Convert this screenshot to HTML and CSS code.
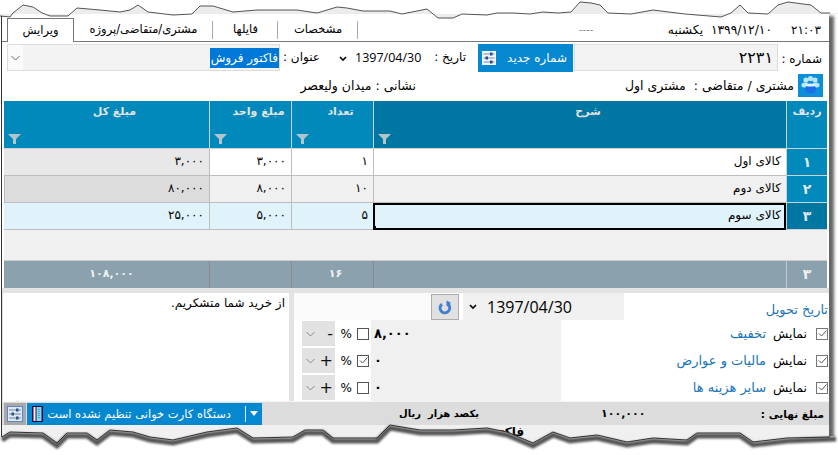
FILE: index.html
```html
<!DOCTYPE html>
<html lang="fa">
<head>
<meta charset="utf-8">
<title>فاکتور فروش</title>
<link rel="stylesheet" href="styles.css">
</head>
<body>
<div class="page">
  <div class="window">
    <header class="topbar">
      <nav class="tabs">
        <span class="tab tab-active">ویرایش</span>
        <span class="tab tab-w2">مشتری/متقاضی/پروژه</span>
        <span class="tab tab-w3">فایلها</span>
        <span class="tab tab-w4">مشخصات</span>
      </nav>
      <span class="dashes">----</span>
      <span class="today">۱۳۹۹/۱۲/۱۰&nbsp; یکشنبه</span>
      <span class="clock">۲۱:۰۳</span>
    </header>

    <section class="row-one" dir="rtl">
      <label class="lbl lbl-num">شماره :</label>
      <div class="num-field">۲۲۳۱</div>
      <button class="new-btn"><span>شماره جدید</span>
        <svg class="new-icon" width="14" height="14" viewBox="0 0 14 14"><rect width="14" height="14" fill="#f2f6fc"/><path d="M1.500 3h11M1.500 7h11M1.500 11h11" stroke="#6f8db5"/><rect x="8" y="1.500" width="2.500" height="3" fill="#2a4f80"/><rect x="3.500" y="5.500" width="2.500" height="3" fill="#2a4f80"/><rect x="8" y="9.500" width="2.500" height="3" fill="#2a4f80"/></svg>
      </button>
      <label class="lbl lbl-date">تاریخ :</label>
      <span class="date-val"><span class="latin">1397/04/30</span></span>
      <svg class="chev-dark" width="8" height="6" viewBox="0 0 8 6"><path d="M1 1l3 3 3-3" fill="none" stroke="#000" stroke-width="1.600"/></svg>
      <label class="lbl lbl-title">عنوان :</label>
      <div class="combo">
        <span class="combo-sel">فاکتور فروش</span>
        <span class="combo-btn"><svg width="9" height="6" viewBox="0 0 9 6"><path d="M.5 1l4 4 4-4" fill="none" stroke="#666"/></svg></span>
      </div>
    </section>

    <section class="row-two" dir="rtl">
      <span class="cust-icon"><svg width="25" height="23" viewBox="0 0 25 23"><g fill="#b9e6fc"><circle cx="8" cy="6" r="2.600"/><circle cx="17" cy="6" r="2.600"/><circle cx="12.500" cy="4.500" r="2.600"/><ellipse cx="7" cy="11" rx="3.600" ry="2.600"/><ellipse cx="18" cy="11" rx="3.600" ry="2.600"/></g><ellipse cx="12.500" cy="15" rx="5.500" ry="4.500" fill="#1a6fe8"/><ellipse cx="12.500" cy="11" rx="5" ry="1.500" fill="#e2f6ff"/></svg></span>
      <span class="cust">مشتری / متقاضی :&nbsp; مشتری اول</span>
      <span class="addr">نشانی : میدان ولیعصر</span>
    </section>

    <section class="grid" dir="rtl">
      <div class="hd hd-first">ردیف</div>
      <div class="hd hd-active">شرح<svg class="funnel" width="13" height="10" viewBox="0 0 13 10"><path d="M0 0h13L8 5v5H5V5z"/></svg></div>
      <div class="hd">تعداد<svg class="funnel" width="13" height="10" viewBox="0 0 13 10"><path d="M0 0h13L8 5v5H5V5z"/></svg></div>
      <div class="hd">مبلغ واحد<svg class="funnel" width="13" height="10" viewBox="0 0 13 10"><path d="M0 0h13L8 5v5H5V5z"/></svg></div>
      <div class="hd hd-last">مبلغ کل<svg class="funnel" width="13" height="10" viewBox="0 0 13 10"><path d="M0 0h13L8 5v5H5V5z"/></svg></div>

      <div class="rh">۱</div>
      <div class="c">کالای اول</div>
      <div class="c">۱</div>
      <div class="c">۳,۰۰۰</div>
      <div class="c c-total">۳,۰۰۰</div>

      <div class="rh">۲</div>
      <div class="c c-alt">کالای دوم</div>
      <div class="c c-alt">۱۰</div>
      <div class="c c-alt">۸,۰۰۰</div>
      <div class="c c-alt-total">۸۰,۰۰۰</div>

      <div class="rh rh-active">۳</div>
      <div class="c c-sel c-focus">کالای سوم<span class="handle"></span></div>
      <div class="c c-sel">۵</div>
      <div class="c c-sel">۵,۰۰۰</div>
      <div class="c c-sel c-end">۲۵,۰۰۰</div>

      <div class="empty"></div>

      <div class="ft ft-count">۳</div>
      <div class="ft"></div>
      <div class="ft ft-mid">۱۶</div>
      <div class="ft"></div>
      <div class="ft ft-mid ft-last">۱۰۸,۰۰۰</div>
    </section>

    <section class="lower">
      <div class="note" dir="rtl">از خرید شما متشکریم.</div>
      <div class="side">
        <div class="side-top">
          <span class="side-blank"></span>
          <button class="refresh"><svg width="16" height="16" viewBox="0 0 16 16"><path d="M5 5.200A4.800 4.800 0 1 0 12 6.500" fill="none" stroke="#3f7fd0" stroke-width="3"/><path d="M9.500 1.500l4 2-.5 4.500-3.500-1z" fill="#3f7fd0"/></svg></button>
          <div class="delivery">
            <svg width="8" height="6" viewBox="0 0 8 6"><path d="M1 1l3 3 3-3" fill="none" stroke="#000" stroke-width="1.600"/></svg>
            <span class="latin">1397/04/30</span>
          </div>
          <div class="delivery-lbl" dir="rtl">تاریخ تحویل</div>
        </div>

        <div class="amount-row">
          <div class="mini"><svg width="9" height="6" viewBox="0 0 9 6"><path d="M.5 1l4 4 4-4" fill="none" stroke="#888"/></svg><span class="sign">-</span></div>
          <div class="pct">%</div>
          <span class="box"></span>
          <div class="val">۸,۰۰۰</div>
          <div class="opt" dir="rtl"><span class="box box-on"><svg width="11" height="11" viewBox="0 0 11 11"><path d="M2 5.500l2.500 2.500L9.500 2.500" fill="none" stroke="#555"/></svg></span><span class="show">نمایش</span><span class="link">تخفیف</span></div>
        </div>
        <div class="amount-row">
          <div class="mini"><svg width="9" height="6" viewBox="0 0 9 6"><path d="M.5 1l4 4 4-4" fill="none" stroke="#888"/></svg><span class="sign">+</span></div>
          <div class="pct">%</div>
          <span class="box box-on"><svg width="11" height="11" viewBox="0 0 11 11"><path d="M2 5.500l2.500 2.500L9.500 2.500" fill="none" stroke="#555"/></svg></span>
          <div class="val">۰</div>
          <div class="opt" dir="rtl"><span class="box box-on"><svg width="11" height="11" viewBox="0 0 11 11"><path d="M2 5.500l2.500 2.500L9.500 2.500" fill="none" stroke="#555"/></svg></span><span class="show">نمایش</span><span class="link">مالیات و عوارض</span></div>
        </div>
        <div class="amount-row">
          <div class="mini"><svg width="9" height="6" viewBox="0 0 9 6"><path d="M.5 1l4 4 4-4" fill="none" stroke="#888"/></svg><span class="sign">+</span></div>
          <div class="pct">%</div>
          <span class="box"></span>
          <div class="val">۰</div>
          <div class="opt" dir="rtl"><span class="box box-on"><svg width="11" height="11" viewBox="0 0 11 11"><path d="M2 5.500l2.500 2.500L9.500 2.500" fill="none" stroke="#555"/></svg></span><span class="show">نمایش</span><span class="link">سایر هزینه ها</span></div>
        </div>
      </div>
    </section>

    <footer class="status">
      <button class="st-icon"><svg width="16" height="16" viewBox="0 0 16 16"><rect x=".5" y=".5" width="15" height="15" fill="#dfe9f7" stroke="#5b86d0"/><path d="M2 4h12M2 8h12M2 12h12" stroke="#6a86a8"/><rect x="9" y="2.500" width="2.500" height="3" fill="#2a4f80"/><rect x="4.500" y="6.500" width="2.500" height="3" fill="#2a4f80"/><rect x="9" y="10.500" width="2.500" height="3" fill="#2a4f80"/></svg></button>
      <div class="card" dir="rtl">
        <svg class="card-tri" width="8" height="5" viewBox="0 0 8 5"><path d="M0 0h8L4 5z" fill="#fff"/></svg>
        <span class="card-sep"></span>
        <span class="card-text">دستگاه کارت خوانی تنظیم نشده است</span>
        <svg width="11" height="16" viewBox="0 0 11 16"><rect width="11" height="16" fill="#2a0a4a"/><rect x="1.500" y="1" width="2" height="14" fill="#f4f4f4"/><rect x="4.500" y="1" width="5" height="14" fill="#7fd8f0"/><path d="M7 3v10" stroke="#2a6a9a" stroke-dasharray="1 1"/></svg>
      </div>
      <div class="st-words" dir="rtl">یکصد هزار&nbsp; ریال</div>
      <div class="st-amount">۱۰۰,۰۰۰</div>
      <div class="st-label" dir="rtl">مبلغ نهایی :</div>
    </footer>
    <div class="under" dir="rtl">فاکتور</div>
  </div>

  <svg class="torn" width="838" height="455" viewBox="0 0 838 455">
    <defs><filter id="soft" x="-5%" y="-50%" width="110%" height="200%"><feGaussianBlur stdDeviation="1.200"/></filter></defs>
    <path class="top-white" d="M0 0H838V14H0Z"/>
    <path class="top-hump" d="M0 16L10 17 13 13 23 5 33 7 42 13 50 16 68 16 77 8 100 10 120 12 130 10 138 5 148 12 173 15 192 14 200 6 213 6 233 12 257 10 280 10 297 10 317 13 337 7 347 8 363 11 390 11 402 14 427 9 438 18 453 18 462 14 487 15 497 13 513 13 530 14 543 12 558 13 571 12 580 2 591 3 600 5 608 13 631 14 653 10 685 14 721 17 731 13 740 5 748 13 768 14 778 5 788 2 811 5 821 13 838 13V14H0Z"/>
    <path class="top-line" d="M0 16L10 17 13 13 23 5 33 7 42 13 50 16 68 16 77 8 100 10 120 12 130 10 138 5 148 12 173 15 192 14 200 6 213 6 233 12 257 10 280 10 297 10 317 13 337 7 347 8 363 11 390 11 402 14 427 9 438 18 453 18 462 14 487 15 497 13 513 13 530 14 543 12 558 13 571 12 580 2 591 3 600 5 608 13 631 14 653 10 685 14 721 17 731 13 740 5 748 13 768 14 778 5 788 2 811 5 821 13 830 13"/>
    <path class="bot-white" d="M0 437L2 437 10 432 43 433 57 443 67 433 87 433 97 440 110 430 133 432 150 437 173 440 207 432 237 428 253 438 293 437 305 430 323 430 333 438 377 438 390 425 420 430 453 430 487 428 507 432 533 443 553 432 570 438 597 435 627 442 653 438 687 440 697 433 740 433 753 442 787 438 838 436V455H0Z"/>
    <path class="bot-shadow" filter="url(#soft)" d="M2 440L10 435 43 436 57 446 67 436 87 436 97 443 110 433 133 435 150 440 173 443 207 435 237 431 253 441 293 440 305 433 323 433 333 441 377 441 390 428 420 433 453 433 487 431 507 435 533 446 553 435 570 441 597 438 627 445 653 441 687 443 697 436 740 436 753 445 787 441 836 439"/>
    <path class="bot-line" d="M2 437L10 432 43 433 57 443 67 433 87 433 97 440 110 430 133 432 150 437 173 440 207 432 237 428 253 438 293 437 305 430 323 430 333 438 377 438 390 425 420 430 453 430 487 428 507 432 533 443 553 432 570 438 597 435 627 442 653 438 687 440 697 433 740 433 753 442 787 438 830 437"/>
  </svg>
</div>
</body>
</html>
```

FILE: styles.css
```css
* { box-sizing: border-box; }
html, body { margin: 0; padding: 0; background: #fff; }
body { font-family: "DejaVu Sans", sans-serif; font-size: 12px; color: #000; }
button { font: inherit; padding: 0; margin: 0; border: 0; }
.latin { font-family: "Open Sans", "Noto Sans", sans-serif; }

.page { position: relative; width: 838px; height: 455px; overflow: hidden; background: #fff; }
.window {
  width: 828px; height: 441px; margin: 14px 0 0 1px; padding-top: 4px;
  background: #fff; border-left: 1px solid #333;
  box-shadow: 5px 2px 3px #666;
  display: flex; flex-direction: column;
}

/* top strip */
.topbar { height: 24px; flex: none; display: flex; align-items: center; border-bottom: 1px solid #777; }
.tabs { display: flex; height: 23px; margin-left: 5px; align-items: stretch; font-size: 11.500px; }
.tab { display: flex; align-items: center; justify-content: center; width: 139px; position: relative; padding-bottom: 1px; }
.tab::after { content: ""; position: absolute; right: 0; top: 3px; bottom: 2px; width: 1px; background: #aaa; }
.tab-active { width: 67px; border: 1px solid #777; border-bottom: 0; height: 24px; background: #fff; }
.tab-active::after { display: none; }
.tab-w3 { width: 65px; }
.tab-w4 { width: 80px; }
.dashes { margin-left: 221px; width: 18px; color: #888; font-size: 10px; }
.today { margin-left: 67px; width: 108px; text-align: right; direction: rtl; unicode-bidi: plaintext; white-space: nowrap; font-size: 12.300px; }
.clock { margin-left: 19px; white-space: nowrap; }

/* form rows */
.row-one { flex: none; height: 29px; margin-top: 2px; display: flex; align-items: stretch; padding-right: 7px; }
.lbl { display: flex; align-items: center; white-space: nowrap; }
.lbl-num { width: 44px; }
.num-field { width: 204px; background: #f3f3f3; border: 1px solid #ddd; font-size: 16px; padding-right: 4px; display: flex; align-items: center; height: 27px; }
.new-btn { width: 95px; height: 28px; margin-right: 1px; background: #0688d1; color: #fff; display: flex; align-items: center; justify-content: space-between; padding: 0 6px 0 4px; white-space: nowrap; }
.lbl-date { margin-right: 12px; width: 45px; padding-bottom: 3px; }
.date-val { width: 66px; display: flex; align-items: center; font-size: 12.500px; direction: ltr; padding-bottom: 2px; }
.chev-dark { align-self: center; margin: 0 8px 0 0; }
.lbl-title { width: 46px; margin-right: 13px; padding-bottom: 3px; padding-right: 6px; font-size: 12px; }
.combo { width: 273px; height: 27px; border: 1px solid #ddd; background: #f3f3f3; display: flex; justify-content: space-between; align-items: center; margin-right: 0; }
.combo-sel { background: #0078d7; color: #fff; height: 20px; display: flex; align-items: center; padding: 0 1px; white-space: nowrap; }
.combo-btn { width: 15px; height: 100%; background: #fafafa; display: flex; align-items: center; justify-content: center; }

.row-two { flex: none; height: 24px; display: flex; align-items: center; padding-right: 6px; white-space: nowrap; font-size: 12.500px; }
.cust-icon { width: 25px; height: 23px; background: #0b8fd8; display: block; margin-left: 4px; }
.cust-icon svg { display: block; }
.cust { width: 378px; }
.addr { display: block; }

/* data grid */
.grid { flex: none; margin: 4px 0 0 2px; width: 823px; display: grid; grid-template-columns: 41px 413px 82px 82px 205px; grid-template-rows: 48px 27px 27px 27px 31px 27px; }
.hd { position: relative; background: #0089ba; color: #e2e2e2; text-align: center; font-weight: bold; font-size: 11px; padding: 4px 0 0 16px; border-left: 1px solid #c8d4d8; border-bottom: 1px solid #c8d4d8; }
.hd-first { padding-left: 0; }
.hd-last { border-left: 0; }
.hd-active { background: #0076a3; }
.funnel { position: absolute; left: 4px; bottom: 4px; fill: #b4c4cb; }
.rh { background: #0089ba; color: #dfe9ee; text-align: center; font-weight: bold; font-size: 14px; line-height: 26px; border-bottom: 1px solid #c8d4d8; border-left: 1px solid #c8d4d8; }
.rh-active { background: #0076a3; }
.c { position: relative; background: #fff; padding: 0 5px; line-height: 25px; border-left: 1px solid #bdbdbd; border-bottom: 1px solid #bdbdbd; white-space: nowrap; }
.c-total { background: #e8e8e8; border-left: 0; }
.c-alt { background: #f0f0f0; }
.c-alt-total { position: relative; background: #dcdcdc; padding: 0 5px; line-height: 25px; border-bottom: 1px solid #bdbdbd; }
.c-sel { background: #e0f2fa; }
.c-end { border-left: 0; }
.c-focus { border: 2px solid #000; padding: 0 3px; line-height: 20px; }
.handle { position: absolute; left: -3px; bottom: -2px; width: 4px; height: 4px; background: #000; }
.empty { grid-column: 1 / -1; background: #f0f0f0; border-bottom: 1px solid #ccc; }
.ft { background: #8ba1ad; border-left: 1px solid #8a8a8a; color: #f2f2f2; }
.ft-count { text-align: center; font-weight: bold; font-size: 14px; line-height: 26px; border-left: 1px solid #bcc8ce; }
.ft-mid { text-align: center; font-weight: bold; line-height: 26px; font-size: 11px; padding-left: 6px; }
.ft-last { border-left: 0; padding-left: 10px; }

/* lower part */
.lower { flex: none; height: 113px; background: #e3e3e3; padding: 5px 0 0 1px; display: flex; gap: 5px; align-items: stretch; }
.note { width: 286px; height: 108px; background: #fff; padding: 3px 4px; }
.side { width: 535px; height: 108px; background: #fff; }
.side-top { display: flex; height: 27px; }
.side-blank { width: 137px; background: #fafafa; }
.refresh { width: 28px; height: 26px; margin-top: 1px; background: #e1e1e1; border: 1px solid #adadad; display: flex; align-items: center; justify-content: center; }
.delivery { width: 161px; margin-left: 4px; background: #f0f0f0; display: flex; align-items: center; gap: 10px; padding-left: 6px; font-size: 16px; }
.delivery-lbl { flex: 1; color: #1b75b8; padding: 9px 1px 0 0; background: #fff; white-space: nowrap; font-size: 13px; }
.amount-row { display: flex; height: 27px; align-items: center; }
.mini { width: 33px; height: 25px; margin-left: 8px; background: #e2e2e2; display: flex; align-items: center; justify-content: space-between; padding: 0 2px 0 4px; }
.sign { font-size: 16px; color: #111; }
.pct { width: 17px; text-align: right; font-size: 12px; }
.box { width: 12px; height: 12px; border: 1px solid #555; background: #fff; margin-left: 5px; display: flex; flex: none; }
.box svg { display: block; margin: -.5px; }
.val { width: 190px; height: 27px; margin-left: 2px; background: #f0f0f0; line-height: 27px; font-weight: bold; font-size: 13px; padding-left: 3px; text-align: left; }
.opt { flex: 1; height: 27px; background: #fff; display: flex; align-items: center; white-space: nowrap; font-size: 13px; }
.opt .box { margin-left: 9px; margin-right: 1px; border-color: #777; }
.show { margin-left: 7px; font-size: 12.500px; }
.link { color: #1b75b8; }

/* status */
.status { flex: none; height: 24px; background: #dcdcdc; border-top: 1px solid #f5f5f5; display: flex; align-items: center; padding-left: 2px; white-space: nowrap; }
.st-icon { width: 22px; height: 22px; background: #a9a9a9; display: flex; align-items: center; justify-content: center; }
.card { width: 235px; height: 22px; margin-left: 1px; background: #0688d1; color: #fff; display: flex; align-items: center; padding: 0 4px 0 5px; }
.card-sep { width: 1px; height: 16px; background: #d8eef8; margin: 0 4px 0 0; }
.card-text { margin: 0 14px 0 0; font-size: 11.500px; flex: 1; }
.st-words { width: 217px; text-align: right; font-weight: bold; font-size: 10px; }
.st-amount { margin-left: 122px; width: 44px; text-align: left; font-weight: bold; font-size: 11px; }
.st-label { flex: 1; text-align: right; font-weight: bold; padding-right: 5px; font-size: 10.500px; }

.under { flex: 1; background: #f0f0f0; font-weight: bold; padding-right: 305px; white-space: nowrap; }

/* torn paper edges */
.torn { position: absolute; left: 0; top: 0; pointer-events: none; }
.top-white { fill: #fff; }
.top-hump { fill: #ececec; }
.top-line { fill: none; stroke: #2b2b2b; stroke-width: .8; }
.bot-white { fill: #fff; }
.bot-shadow { fill: none; stroke: #555; stroke-width: 5; }
.bot-line { fill: none; stroke: #222; stroke-width: .9; }
```
